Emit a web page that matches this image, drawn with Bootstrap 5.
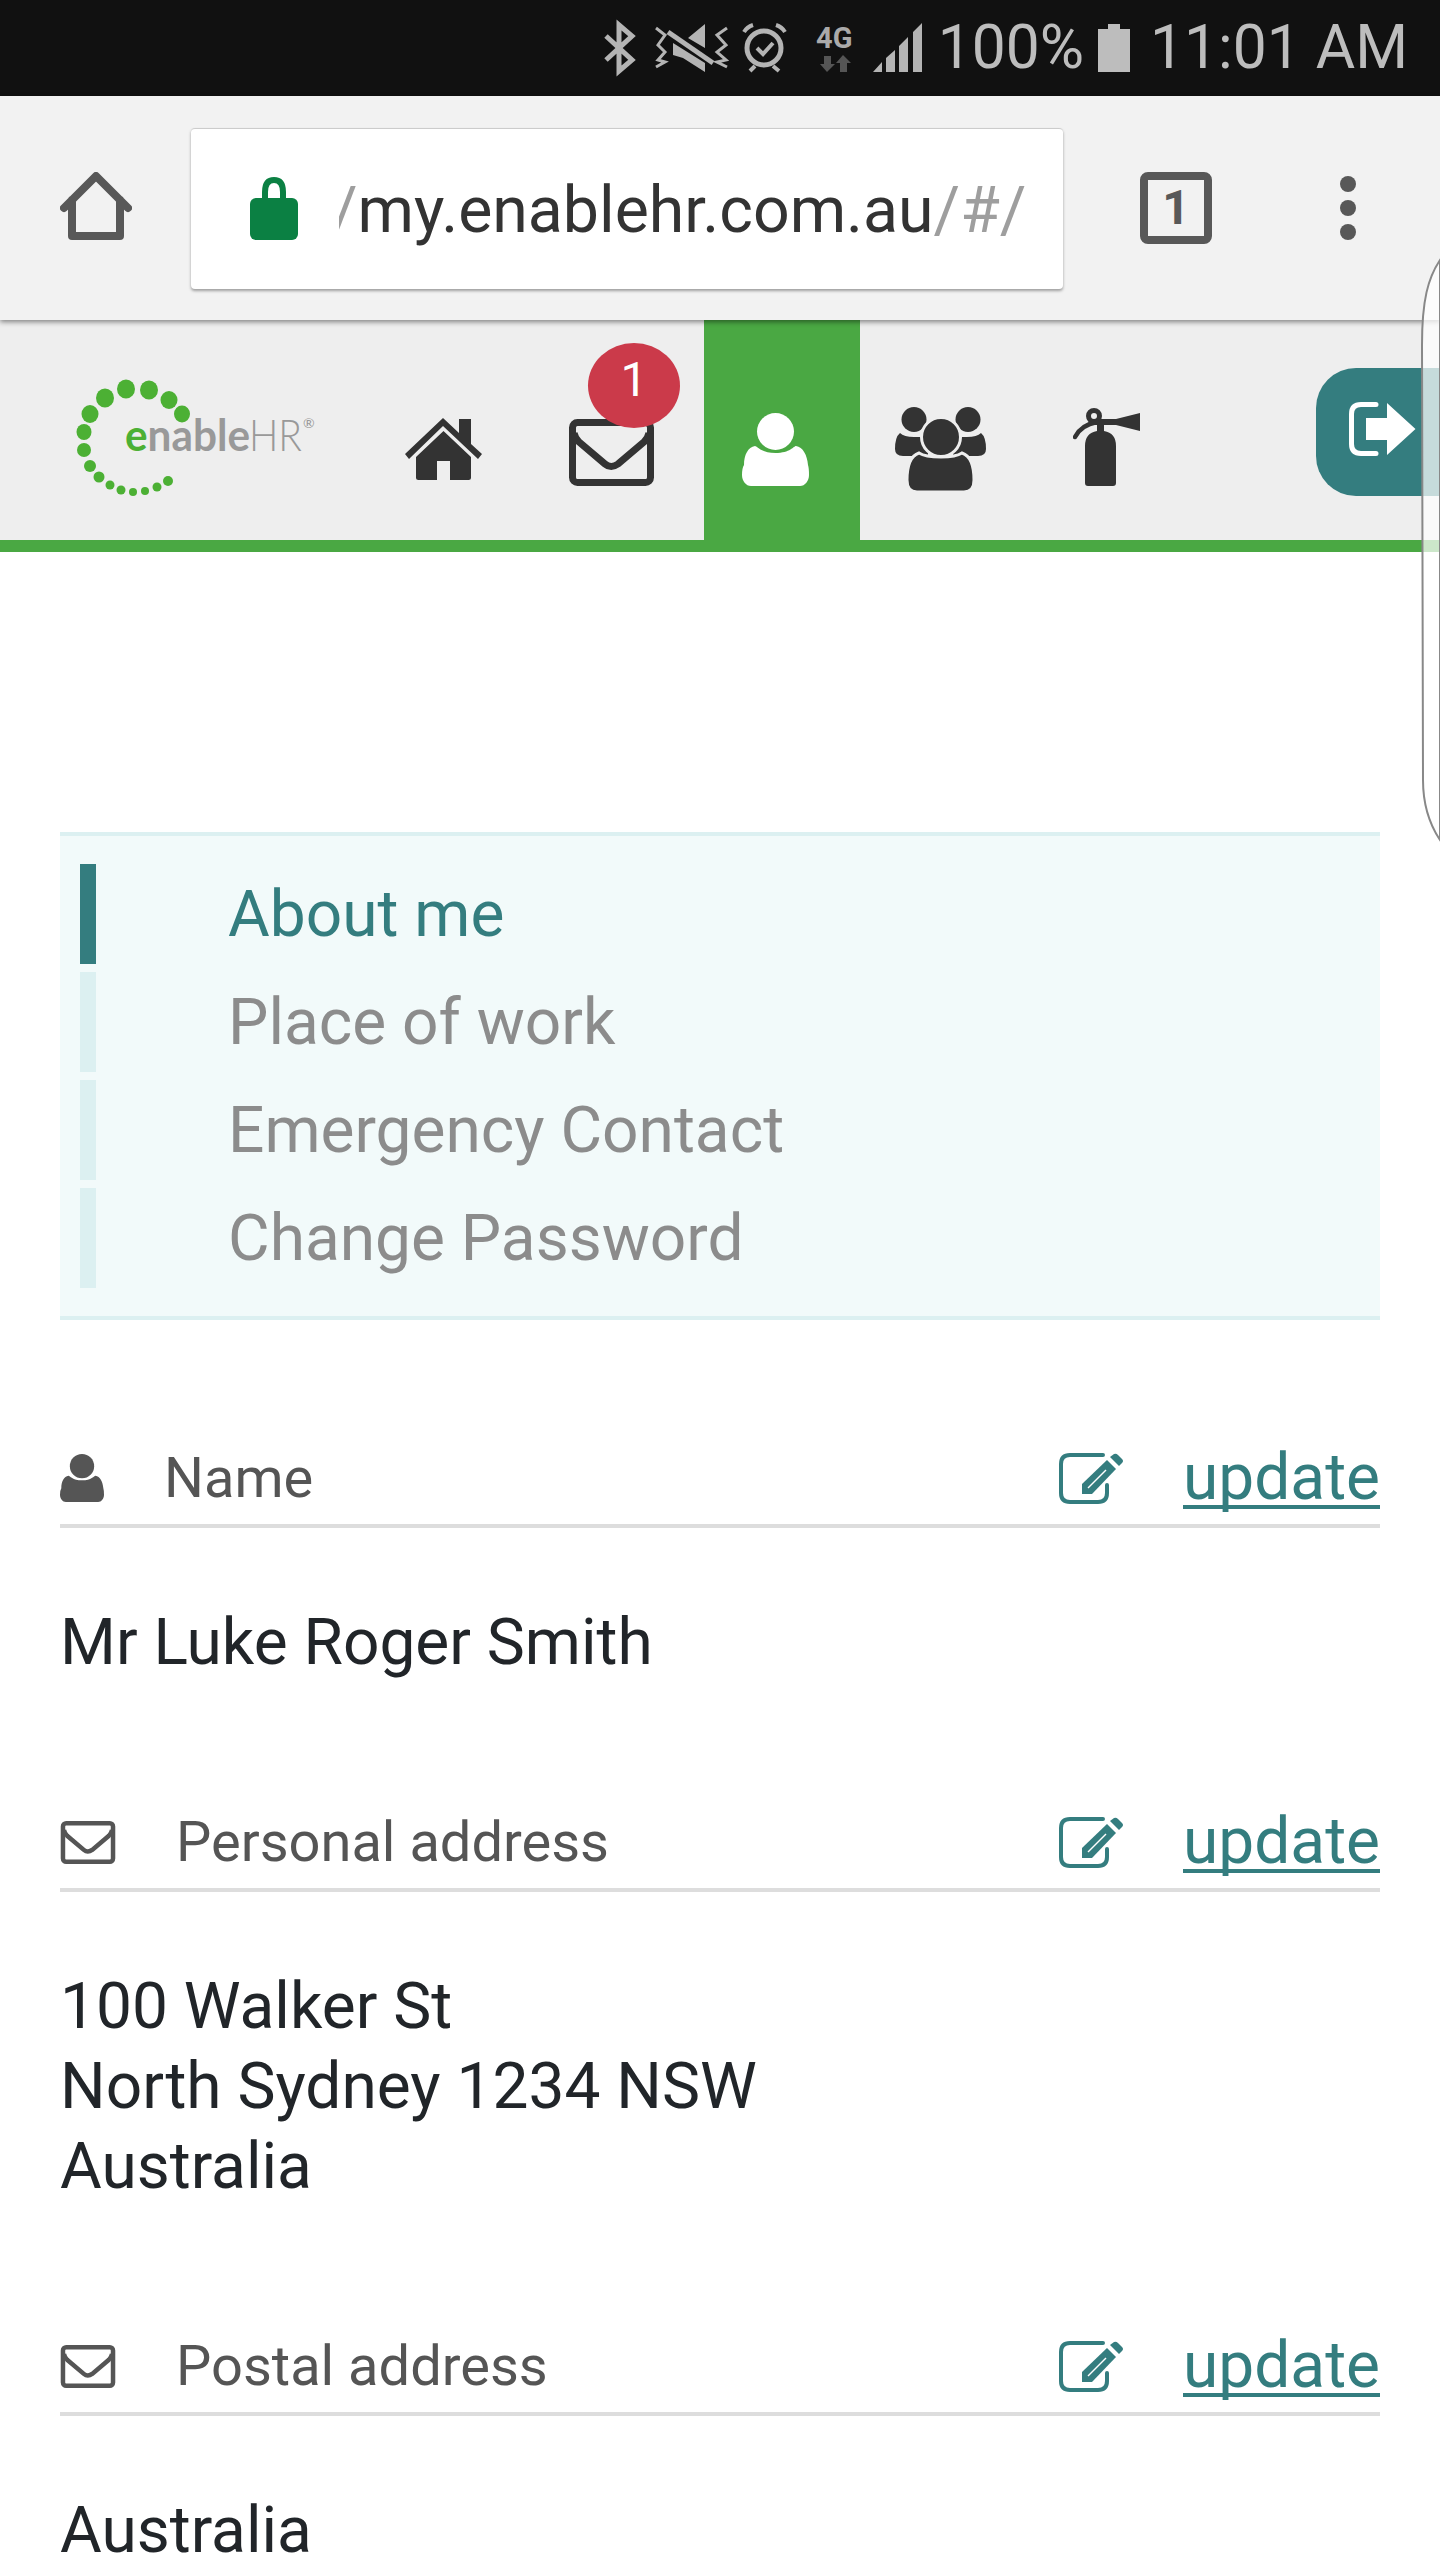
<!DOCTYPE html>
<html lang="en">
<head>
  <meta charset="UTF-8" />
  <meta name="viewport" content="width=device-width, initial-scale=1" />
  <title>enableHR - About me</title>
  <link href="https://cdn.jsdelivr.net/npm/bootstrap@5.3.0/dist/css/bootstrap.min.css" rel="stylesheet" />
  <style>
    html, body { height: 2560px; overflow: hidden; }
    body { font-family: Roboto, "Liberation Sans", sans-serif; background: #fff; color: #212529; position: relative; }

    .status-strip { height: 96px; background: #111; color: #bdbdbd; font-size: 60.5px; line-height: 102px; padding-right: 32px; }
    .status-icons { margin-right: 8px; }
    .status-battery { margin: 0 20px 0 14px; }

    .chrome-strip { height: 224px; background: #f2f2f2; padding-left: 60px; box-shadow: 0 2px 5px rgba(0,0,0,.45); position: relative; z-index: 2; color: #585858; }
    .url-box { width: 872px; height: 161px; margin-left: 59px; background: #fff; border-radius: 4px; border-top: 1px solid #ccc; box-shadow: 0 2px 3px rgba(0,0,0,.35); padding-left: 59px; }
    .url-path { position: relative; margin-left: 41px; white-space: nowrap; font-size: 64.4px; color: #333; line-height: 90px; padding-top: 3px; }
    .url-path::before { content: ""; position: absolute; left: -14px; top: 0; bottom: 0; width: 14px; background: #fff; z-index: 1; }
    .url-path span:first-child { margin-left: -8px; }
    .url-dim { color: #9e9e9e; }
    .tab-count { width: 72px; height: 72px; margin-left: 77px; border: 8px solid #585858; border-radius: 8px; font-size: 48px; font-weight: 700; line-height: 1; }
    .menu-dots { margin-left: 128px; gap: 8px; }
    .menu-dots i { width: 16px; height: 16px; border-radius: 50%; background: #585858; display: block; }

    .app-nav { height: 232px; background: #eee; border-bottom: 12px solid #4aa843; color: #333; }
    .app-logo { margin: 58px 0 0 74px; }
    .nav-home { margin: 98px 0 0 86px; }
    .nav-mail { margin: 99px 0 0 87px; position: relative; }
    .nav-active { width: 156px; height: 232px; margin-left: 50px; background: #4aa843; color: #fff; padding: 93px 0 0 38px; }
    .nav-team { margin: 87px 0 0 35px; }
    .nav-fire { margin: 88px 0 0 87px; }
    .nav-exit { margin: 48px 0 0 auto; width: 124px; height: 128px; background: #347d7f; color: #fff; border-radius: 40px 0 0 40px; padding: 34px 0 0 33px; }
    .mail-badge { position: absolute; left: 19px; top: -76px; width: 92px; height: 85px; border-radius: 50%; background: #cb3a4a; color: #fff; font-size: 48px; line-height: 74px; text-align: center; }

    .page-body { padding: 280px 60px 0; }
    .side-menu { background: #f2fafa; border-top: 4px solid #dcf0f1; border-bottom: 4px solid #dcf0f1; padding: 28px 0 20px 20px; margin-bottom: 120px; }
    .side-menu a { display: block; height: 100px; margin-bottom: 8px; border-left: 16px solid #dcf0f1; padding-left: 132px; font-size: 64px; line-height: 102px; color: #8c8c8c; text-decoration: none; }
    .side-menu a.current { border-left-color: #347d7f; color: #347d7f; }

    .field-head { height: 88px; padding-bottom: 8px; border-bottom: 4px solid #ddd; color: #555; font-size: 56px; }
    .field-head .field-label { margin-left: 60px; }
    .field-edit { color: #347d7f; }
    .field-edit a { margin-left: 60px; color: #347d7f; font-size: 64px; line-height: 76px; text-decoration: underline; text-decoration-thickness: 4px; text-underline-offset: 6px; text-decoration-skip-ink: none; }
    .field-value { font-size: 64px; line-height: 80px; padding-top: 75px; margin-bottom: 121px; }

    .edge-handle { position: absolute; left: 1400px; top: 250px; z-index: 3; }
  </style>
</head>
<body>

  <svg class="d-none">
    <symbol id="ico-user" viewBox="0 0 67 73">
      <circle cx="33.5" cy="18.5" r="18.5" />
      <path d="M2 52C2 42 6 34 13 33C15 33 19 40 33.5 40C48 40 52 33 54 33C61 34 65 42 66 52Q67 55 67 62C67 68 63 73 58 73H9C4 73 0 68 0 62Q0 55 2 52Z" />
    </symbol>
    <symbol id="ico-mail" viewBox="0 0 85 67">
      <rect x="3.5" y="3.5" width="78" height="60" rx="5" fill="none" stroke="currentColor" stroke-width="7" />
      <path d="M5 14Q6 19 10 23L36 45Q42 50 49 45L75 23Q79 19 80 14" fill="none" stroke="currentColor" stroke-width="7" />
    </symbol>
    <symbol id="ico-edit" viewBox="0 0 64 51">
      <path d="M44 2H11Q2 2 2 11V40Q2 49 11 49H39Q48 49 48 40V32" fill="none" stroke="currentColor" stroke-width="4" stroke-linecap="round" />
      <path d="M23 31L48 7L57 16L33 41H23Z" />
      <path d="M51 4L55 1Q57 0 59 2L63 6Q65 8 63 10L60 13Z" />
      <path d="M29 35L47 17" stroke="#fff" stroke-width="1.5" />
    </symbol>
  </svg>

  <div class="status-strip d-flex justify-content-end align-items-center">
    <svg class="status-icons" width="330" height="96" viewBox="600 0 330 96">
      <path d="M606 36L632 60L619 71V25L632 36L606 60" fill="none" stroke="#b4b4b4" stroke-width="5" />
      <path d="M705 24L688 38L705 48ZM673 43V55L683 58L705 72V63Z" fill="#b4b4b4" />
      <path d="M668 32L713 63" stroke="#b4b4b4" stroke-width="5" />
      <path d="M656 28L665 35L658 45L665 52L658 60L665 62L656 67M727 28L717 35L726 45L717 52L726 60L717 62L727 67" fill="none" stroke="#b4b4b4" stroke-width="3" />
      <circle cx="764" cy="48" r="17" fill="none" stroke="#b4b4b4" stroke-width="5" />
      <path d="M757 48L763 54L773 43M744 32Q747 27 753 25M776 25Q782 27 785 32M750 71L755 66M779 71L773 66" fill="none" stroke="#b4b4b4" stroke-width="4" />
      <text x="816" y="48" font-family="Roboto" font-weight="700" font-size="29" fill="#aaa">4G</text>
      <path d="M824 56H831V64H835L827 72L820 64H824ZM840 72H847V63H851L843 55L836 63H840Z" fill="#555" />
      <path d="M873 72L882 62V72ZM886 58L895 50V72H886ZM899 46L908 37V72H899ZM913 32L922 23V72H913Z" fill="#b4b4b4" />
    </svg>
    <span>100%</span>
    <svg class="status-battery" width="32" height="48" viewBox="0 0 32 48"><path d="M10 0H22V5H32V48H0V5H10Z" fill="#bdbdbd" /></svg>
    <span>11:01 AM</span>
  </div>

  <div class="chrome-strip d-flex align-items-center">
    <svg width="72" height="72" viewBox="0 0 72 72" fill="none" stroke="currentColor" stroke-width="8" stroke-linecap="round" stroke-linejoin="round">
      <path d="M4 36L36 4L68 36M12 28V64H60V28" />
    </svg>
    <div class="url-box d-flex align-items-center">
      <svg width="48" height="63" viewBox="0 0 48 63">
        <path d="M15 24V15Q15 3 24 3Q33 3 33 15V24" fill="none" stroke="#0b8043" stroke-width="6" />
        <rect y="21" width="48" height="42" rx="6" fill="#0b8043" />
      </svg>
      <div class="url-path"><span class="url-dim">/</span><span>my.enablehr.com.au</span><span class="url-dim">/#/</span></div>
    </div>
    <div class="tab-count d-flex align-items-center justify-content-center">1</div>
    <div class="menu-dots d-flex flex-column"><i></i><i></i><i></i></div>
  </div>

  <nav class="app-nav d-flex align-items-start">
    <svg class="app-logo" width="245" height="120" viewBox="74 378 245 120">
      <g fill="#4cb034">
        <ellipse cx="126" cy="389" rx="9" ry="9.5" /><ellipse cx="149" cy="390" rx="9" ry="9.5" />
        <ellipse cx="169" cy="400" rx="8.5" ry="9" /><ellipse cx="182" cy="414" rx="8" ry="8.5" />
        <ellipse cx="105" cy="398" rx="9" ry="9.5" /><ellipse cx="90" cy="414" rx="8.5" ry="9" />
        <ellipse cx="84" cy="432" rx="7.5" ry="8" /><ellipse cx="84" cy="450" rx="7" ry="7" />
        <circle cx="90" cy="466" r="6" /><circle cx="99" cy="477" r="5.5" />
        <circle cx="110" cy="485" r="4.5" /><circle cx="121" cy="490" r="4.5" />
        <circle cx="133" cy="492" r="4" /><circle cx="145" cy="491" r="4" />
        <circle cx="157" cy="487" r="4.5" /><circle cx="168" cy="481" r="5" />
      </g>
      <text x="125" y="451" font-family="Lato, sans-serif" font-size="43" font-weight="700" fill="#999" textLength="125" lengthAdjust="spacingAndGlyphs"><tspan fill="#4cb034">e</tspan>nable</text>
      <text x="249" y="451" font-family="Lato, sans-serif" font-size="43" font-weight="300" fill="#999" textLength="53" lengthAdjust="spacingAndGlyphs">HR</text>
      <text x="303" y="428" font-family="Lato, sans-serif" font-size="14" fill="#999">®</text>
    </svg>
    <a class="nav-home text-reset" href="#">
      <svg class="d-block" width="77" height="62" viewBox="0 0 77 62" fill="currentColor">
        <path d="M38 0L54 15V1H66V26L77 36L73 41L38 8L4 41L0 36Z" />
        <path d="M38.5 13L66 39V59.5A2.5 2.5 0 0 1 63.500 62H45V43H32V62H13.500A2.500 2.500 0 0 1 11 59.500V39Z" />
      </svg>
    </a>
    <a class="nav-mail text-reset" href="#">
      <svg class="d-block" width="85" height="67" fill="currentColor"><use href="#ico-mail" /></svg>
      <span class="mail-badge">1</span>
    </a>
    <a class="nav-active" href="#">
      <svg class="d-block" width="67" height="73" fill="currentColor"><use href="#ico-user" /></svg>
    </a>
    <a class="nav-team text-reset" href="#">
      <svg class="d-block" width="91" height="85" viewBox="0 0 91 85" fill="currentColor">
        <circle cx="19" cy="12.500" r="12.500" /><circle cx="73" cy="12.500" r="12.500" />
        <path d="M5 26Q9 30 19 30Q29 30 33 30V49H8Q0 49 0 42Q0 30 5 26ZM86 26Q82 30 72 30Q62 30 58 30V49H83Q91 49 91 42Q91 30 86 26Z" />
        <path d="M24 46Q30 50 46 50Q61 50 67 46Q79 50 79 73Q79 85 69 85H22Q12 85 12 73Q12 50 24 46Z" stroke="#eee" stroke-width="3" />
        <circle cx="46" cy="30" r="19.500" stroke="#eee" stroke-width="3" />
      </svg>
    </a>
    <a class="nav-fire text-reset" href="#">
      <svg class="d-block" width="67" height="78" viewBox="0 0 67 78" fill="currentColor">
        <circle cx="21" cy="8" r="5.500" fill="none" stroke="currentColor" stroke-width="5" />
        <path d="M22 11H43L67 5V23L43 17H31V23Q43 25 43 38V75Q43 78 40 78H15Q12 78 12 75V38Q12 25 24 23V17H22Z" />
        <path d="M24 14Q8 17 2 29" fill="none" stroke="currentColor" stroke-width="4.500" stroke-linecap="round" />
      </svg>
    </a>
    <a class="nav-exit" href="#">
      <svg class="d-block" width="67" height="54" viewBox="0 0 67 54">
        <path d="M27 2.500H12Q2.500 2.500 2.500 12V42Q2.500 51.500 12 51.500H27" fill="none" stroke="#fff" stroke-width="5" stroke-linecap="round" />
        <path d="M17 16H38V1L66.500 27L38 53V38H17Z" fill="#fff" />
      </svg>
    </a>
  </nav>

  <div class="page-body">
    <div class="side-menu">
      <a class="current" href="#">About me</a>
      <a href="#">Place of work</a>
      <a href="#">Emergency Contact</a>
      <a href="#">Change Password</a>
    </div>

    <div class="field-head d-flex align-items-center">
      <svg width="44" height="48" fill="currentColor"><use href="#ico-user" /></svg>
      <span class="field-label">Name</span>
      <div class="field-edit d-flex align-items-center ms-auto">
        <svg width="64" height="51" fill="currentColor"><use href="#ico-edit" /></svg>
        <a href="#">update</a>
      </div>
    </div>
    <div class="field-value">Mr Luke Roger Smith</div>

    <div class="field-head d-flex align-items-center">
      <svg width="56" height="43" fill="currentColor"><use href="#ico-mail" /></svg>
      <span class="field-label">Personal address</span>
      <div class="field-edit d-flex align-items-center ms-auto">
        <svg width="64" height="51" fill="currentColor"><use href="#ico-edit" /></svg>
        <a href="#">update</a>
      </div>
    </div>
    <div class="field-value">100 Walker St<br />North Sydney 1234 NSW<br />Australia</div>

    <div class="field-head d-flex align-items-center">
      <svg width="56" height="43" fill="currentColor"><use href="#ico-mail" /></svg>
      <span class="field-label">Postal address</span>
      <div class="field-edit d-flex align-items-center ms-auto">
        <svg width="64" height="51" fill="currentColor"><use href="#ico-edit" /></svg>
        <a href="#">update</a>
      </div>
    </div>
    <div class="field-value">Australia</div>
  </div>

  <svg class="edge-handle" width="40" height="600" viewBox="1400 250 40 600">
    <path d="M1440 260C1428 278 1422 300 1422 345L1423 780C1423 805 1430 825 1440 840Z" fill="#fff" fill-opacity=".72" stroke="#888" stroke-width="2" />
  </svg>

  <script src="https://cdn.jsdelivr.net/npm/bootstrap@5.3.0/dist/js/bootstrap.bundle.min.js"></script>
</body>
</html>
